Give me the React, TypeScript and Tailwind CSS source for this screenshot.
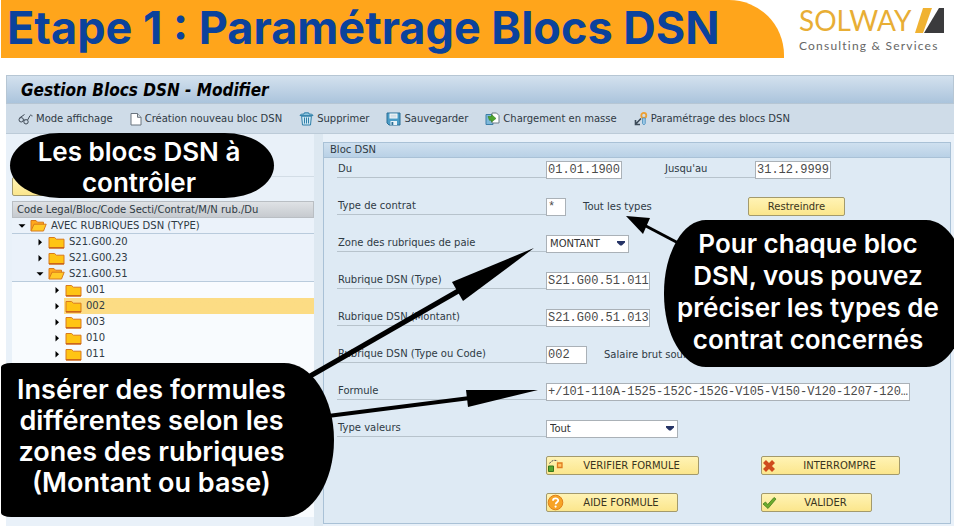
import type { ReactNode } from "react";

const ui = "font-['DejaVu_Sans',sans-serif]";
const mono = "font-['Liberation_Mono',monospace]";
const display = "font-['Inter','Open_Sans',sans-serif]";

function GlassesIcon() {
  return (
    <svg width="15" height="12" viewBox="0 0 15 12" fill="none" stroke="#3f4a56" strokeWidth="1">
      <circle cx="3.2" cy="6.8" r="2.2" />
      <circle cx="8" cy="8.8" r="2.2" />
      <path d="M1.5 5 6.5 1.5M5.2 7.2l1-.6 .6 .7M9.6 7 12 2.6c.8-1.2 2-.6 2 .8" />
    </svg>
  );
}

function PageIcon() {
  return (
    <svg width="12" height="14" viewBox="0 0 12 14" fill="#fff" stroke="#6a747e" strokeWidth="1">
      <path d="M1 1.5h6.5l3.5 3.8v7.7H1z" />
      <path d="M7.5 1.5v3.8H11" fill="#d5dce2" />
    </svg>
  );
}

function TrashIcon() {
  return (
    <svg width="15" height="14" viewBox="0 0 15 14" fill="none" stroke="#2f7fa8" strokeWidth="1">
      <path d="M2.6 4.2h9.8l-.9 8.8h-8z" fill="#cfe8f4" />
      <path d="M1 3.6C1.4 2 3 2.2 5 2l.4-1.2h4.2L10 2c2 .2 3.600 0 4 1.600z" fill="#8cc4de" />
      <path d="M5.500 5.500v6M7.500 5.500v6M9.500 5.500v6" />
    </svg>
  );
}

function SaveIcon() {
  return (
    <svg width="15" height="14" viewBox="0 0 15 14">
      <path d="M1 1h13v12H3l-2-2z" fill="#4a9cc6" stroke="#2a6f96" />
      <path d="M3.500 1.500h8v5h-8z" fill="#f6fafc" />
      <path d="M4.500 3.200h6M4.500 4.900h6" stroke="#b5c9d6" strokeWidth=".8" />
      <path d="M4.500 9h6.500v4H4.500z" fill="#e8f2f8" />
      <path d="M5.500 10h1.800v3H5.500z" fill="#2a6f96" />
    </svg>
  );
}

function UploadIcon() {
  return (
    <svg width="15" height="14" viewBox="0 0 15 14">
      <path d="M1 2.500h7v10H1z" fill="#7db8da" stroke="#3d7ea8" />
      <path d="M7 1h4.500L14 3.500V11H7z" fill="#fff" stroke="#6d7c88" />
      <path d="M3 4.500h3.500V2.600L11 6.500 6.500 10V8.300H4.500z" fill="#4ea52e" stroke="#37801d" strokeWidth=".6" />
    </svg>
  );
}

function KeyToolIcon() {
  return (
    <svg width="14" height="14" viewBox="0 0 14 14" fill="none">
      <circle cx="9.800" cy="3.400" r="2.500" stroke="#eda032" strokeWidth="1.800" />
      <path d="M8.500 6h2.800v5.500L9.900 13l-1.400-1.500z" fill="#9cc8e6" stroke="#4b8fbd" strokeWidth=".8" />
      <path d="M7 6.500 2 11.800M1.500 8v4.500H6" stroke="#3b4a58" strokeWidth="1.600" />
    </svg>
  );
}

function FolderIcon({ open }: { open?: boolean }) {
  return (
    <svg width="17" height="13" viewBox="0 0 17 13" strokeLinejoin="round">
      {open ? (
        <>
          <path d="M1 11.800V1.500h5l1.500 1.700h6V6" fill="#ffa81c" stroke="#d97a1c" />
          <path d="M1 12 4 5.200h12.200L13.500 12z" fill="#ffca28" stroke="#d97a1c" />
        </>
      ) : (
        <>
          <path d="M1 1.500h5.500L8.500 3.200H16V12H1z" fill="#ffc414" stroke="#d97a1c" />
          <path d="M1 11.800h15" stroke="#c9601a" strokeWidth="1.400" />
        </>
      )}
    </svg>
  );
}

function Caret({ open }: { open?: boolean }) {
  return (
    <svg width="8" height="8" viewBox="0 0 8 8" fill="#000">
      {open ? <path d="M.5 2.200h7L4 5.800z" /> : <path d="M2.500 1v6.400L6 4.200z" />}
    </svg>
  );
}

function FlowIcon() {
  return (
    <svg width="17" height="15" viewBox="0 0 17 15">
      <path d="M1.500 8h5v5.500h-5z" fill="#55a630" stroke="#37761c" />
      <path d="M10.500 5h4.500v4.500h-4.500z" fill="#ffc766" stroke="#e07b1e" strokeWidth="1.300" />
      <path d="M2.500 5.500C4 2.500 8 1.500 10.500 3" fill="none" stroke="#555" strokeDasharray="2 1" />
    </svg>
  );
}

function HelpIcon() {
  return (
    <svg width="17" height="17" viewBox="0 0 17 17">
      <circle cx="8.500" cy="8.500" r="7.300" fill="#f7a325" stroke="#e0801a" />
      <path d="M6 6.700c0-3.200 5.200-3 5.200-.3 0 1.900-2.500 1.900-2.500 3.900" fill="none" stroke="#fff" strokeWidth="1.800" />
      <circle cx="8.600" cy="12.600" r="1.100" fill="#fff" />
    </svg>
  );
}

function CrossIcon() {
  return (
    <svg width="14" height="14" viewBox="0 0 14 14">
      <path d="m2.500 2.500 9 9M11.500 2.500l-9 9" stroke="#cf4a1c" strokeWidth="4.200" />
    </svg>
  );
}

function CheckIcon() {
  return (
    <svg width="15" height="14" viewBox="0 0 15 14">
      <path d="M1 8 3.500 6l2.200 2.600L12 1.500l2 1.500-8 9.500z" fill="#6cab2e" stroke="#447f1c" strokeWidth=".8" />
    </svg>
  );
}

const tools: { label: string; icon: ReactNode }[] = [
  { label: "Mode affichage", icon: <GlassesIcon /> },
  { label: "Création nouveau bloc DSN", icon: <PageIcon /> },
  { label: "Supprimer", icon: <TrashIcon /> },
  { label: "Sauvegarder", icon: <SaveIcon /> },
  { label: "Chargement en masse", icon: <UploadIcon /> },
  { label: "Paramétrage des blocs DSN", icon: <KeyToolIcon /> },
];

const leaves = ["001", "002", "003", "010", "011"];

function TreeRow({ label, open, className }: { label: string; open?: boolean; className: string }) {
  return (
    <li className={`flex h-4 items-center ${className}`}>
      <button type="button" className="flex h-4 items-center">
        <Caret open={open} />
        <span className="ml-1">
          <FolderIcon open={open} />
        </span>
        <span className="ml-1">{label}</span>
      </button>
    </li>
  );
}

function FormRow({ id, label, children }: { id?: string; label: string; children: ReactNode }) {
  return (
    <div className="flex h-[17px] items-center">
      <label htmlFor={id} className="flex h-[17px] w-[209px] shrink-0 items-center border-b border-[#b7c3cc] pl-px">
        {label}
      </label>
      {children}
    </div>
  );
}

function TextField({ id, value, className }: { id: string; value: string; className: string }) {
  return (
    <input
      id={id}
      defaultValue={value}
      className={`h-[18px] shrink-0 border border-[#aab1b7] bg-white pl-px text-[12px] text-[#4a4a4a] outline-none ${mono} ${className}`}
    />
  );
}

function SelectField({ id, value, className }: { id: string; value: string; className: string }) {
  return (
    <div className={`relative h-[18px] ${className}`}>
      <select id={id} className="h-[18px] w-full appearance-none border border-[#aab1b7] bg-white pl-[3px] text-[#333]">
        <option>{value}</option>
      </select>
      <svg className="pointer-events-none absolute top-[6px] right-[4px]" width="8" height="5" viewBox="0 0 8 5">
        <path d="M0 0h8v1.500L4.800 4.500H3.200L0 1.500z" fill="#263466" />
      </svg>
    </div>
  );
}

function YellowButton({ icon, children, className }: { icon?: ReactNode; children: ReactNode; className: string }) {
  return (
    <button
      type="button"
      className={`flex h-[19px] shrink-0 items-center rounded-[2px] border border-[#a39a6c] bg-linear-to-b from-[#fff3b4] to-[#fbe68c] text-[#3a3520] ${className}`}
    >
      {icon && <span className="w-[18px] shrink-0">{icon}</span>}
      <span className="flex-1 text-center">{children}</span>
    </button>
  );
}

function Callout({ lines, className }: { lines: string[]; className: string }) {
  return (
    <div className={`absolute flex flex-col items-center justify-center bg-black text-center font-semibold whitespace-nowrap text-white ${display} ${className}`}>
      {lines.map((line) => (
        <span key={line}>{line}</span>
      ))}
    </div>
  );
}

function Logo() {
  return (
    <div className="mr-[10px] flex w-[145px] flex-col pt-[3px] font-['Lato',sans-serif]">
      <div className="flex h-[35px] items-center justify-between">
        <span className="text-[28px] leading-[35px] text-[#e8ae35]">SOLWAY</span>
        <svg width="29" height="25" viewBox="0 0 29 25">
          <path d="M8 0h9L8 25H0z" fill="#f0b232" />
          <path d="M24 0h5v25H9z" fill="#3b3b3d" />
        </svg>
      </div>
      <span className="text-[12px] leading-[15px] tracking-widest whitespace-nowrap text-[#666]">Consulting &amp; Services</span>
    </div>
  );
}

export default function App() {
  return (
    <div className="relative w-full overflow-hidden bg-white pr-px">
      <header className="flex h-[58px] justify-between">
        <h1 className={`ml-px h-[58px] w-[783px] rounded-tr-[55px] bg-[#ffa51b] pl-[6px] text-[45px] leading-[55px] font-bold whitespace-nowrap text-[#0b429c] ${display}`}>
          Etape 1 : Paramétrage Blocs DSN
        </h1>
        <Logo />
      </header>

      <main className={`mt-[17px] ml-[6px] text-[10px] leading-[14px] text-[#2f3a44] ${ui}`}>
        <h2 className="flex h-[29px] items-center border border-[#b6c6d4] bg-linear-to-b from-[#d3e1ee] to-[#abc4dc] pl-[14px] font-['DejaVu_Sans_Condensed','DejaVu_Sans',sans-serif] text-[17px] font-bold text-black italic">
          Gestion Blocs DSN - Modifier
        </h2>
        <nav className="flex h-[30px] items-center gap-[17px] border-b border-[#bccbd8] bg-[#cfdce8] pl-3">
          {tools.map((t) => (
            <button key={t.label} type="button" className="flex items-center gap-[3px] whitespace-nowrap">
              {t.icon}
              {t.label}
            </button>
          ))}
        </nav>

        <div className="flex h-[392px] bg-[#e9f1f9]">
          <aside className="flex w-[317px] shrink-0 flex-col border-r-[9px] border-[#dde8f1] pl-[6px]">
            <div className="h-[43px] border-b border-[#d3dde6]" />
            <YellowButton className="w-16">{" "}</YellowButton>
            <div className="mt-[5px] flex h-[17px] items-center border border-[#b9bec3] bg-linear-to-b from-[#dfe2e5] to-[#c6cacf] pl-1">
              Code Legal/Bloc/Code Secti/Contrat/M/N rub./Du
            </div>
            <ul className="bg-[#f8fbfe]">
              <TreeRow label="AVEC RUBRIQUES DSN (TYPE)" open className="border-b border-[#b9cbdc] bg-[#ebf2fa] pl-[6px]" />
              <TreeRow label="S21.G00.20" className="bg-[#ebf2fa] pl-6" />
              <TreeRow label="S21.G00.23" className="bg-[#ebf2fa] pl-6" />
              <TreeRow label="S21.G00.51" open className="border-b border-[#b9cbdc] bg-[#ebf2fa] pl-6" />
              {leaves.map((l) => (
                <TreeRow
                  key={l}
                  label={l}
                  className={l === "002" ? "bg-linear-to-r from-transparent from-[52px] to-[#fcdc84] to-[52px] pl-[41px]" : "pl-[41px]"}
                />
              ))}
            </ul>
            <div className="h-[155px] bg-[#f8fbfe]" />
          </aside>

          <section className="mt-[8px] mr-[3px] flex h-[382px] flex-1 flex-col border border-[#a9c1d6] bg-[#deeaf4]">
            <h3 className="flex h-[15px] items-center border-b border-[#a9c1d6] bg-linear-to-b from-[#cfe0ef] to-[#b9d1e6] pl-[6px]">
              Bloc DSN
            </h3>
            <form className="flex flex-col gap-5 pt-[3px] pl-[13px]">
              <FormRow id="du" label="Du">
                <TextField id="du" value="01.01.1900" className="w-[76px]" />
                <label htmlFor="au" className="ml-[43px] flex h-[17px] w-[90px] items-center border-b border-[#b7c3cc]">
                  Jusqu'au
                </label>
                <TextField id="au" value="31.12.9999" className="w-[76px]" />
              </FormRow>
              <FormRow id="contrat" label="Type de contrat">
                <TextField id="contrat" value="*" className="w-[20px]" />
                <span className="ml-[17px] w-[165px]">Tout les types</span>
                <YellowButton className="w-[97px]">Restreindre</YellowButton>
              </FormRow>
              <FormRow id="zone" label="Zone des rubriques de paie">
                <SelectField id="zone" value="MONTANT" className="w-[83px]" />
              </FormRow>
              <FormRow id="type" label="Rubrique DSN (Type)">
                <TextField id="type" value="S21.G00.51.011" className="w-[104px]" />
              </FormRow>
              <FormRow id="montant" label="Rubrique DSN (Montant)">
                <TextField id="montant" value="S21.G00.51.013" className="w-[104px]" />
              </FormRow>
              <FormRow id="code" label="Rubrique DSN (Type ou Code)">
                <TextField id="code" value="002" className="w-[41px]" />
                <span className="ml-[17px]">Salaire brut soumis</span>
              </FormRow>
              <FormRow id="formule" label="Formule">
                <TextField id="formule" value="+/101-110A-1525-152C-152G-V105-V150-V120-1207-120…" className="w-[364px]" />
              </FormRow>
              <FormRow id="valeurs" label="Type valeurs">
                <SelectField id="valeurs" value="Tout" className="w-[132px]" />
              </FormRow>
              <div className="flex h-[17px] items-center pl-[209px]">
                <div className="w-[215px]">
                  <YellowButton icon={<FlowIcon />} className="w-[153px]">VERIFIER FORMULE</YellowButton>
                </div>
                <YellowButton icon={<CrossIcon />} className="w-[139px]">INTERROMPRE</YellowButton>
              </div>
              <div className="flex h-[17px] items-center pl-[209px]">
                <div className="w-[215px]">
                  <YellowButton icon={<HelpIcon />} className="w-[132px]">AIDE FORMULE</YellowButton>
                </div>
                <YellowButton icon={<CheckIcon />} className="w-[111px]">VALIDER</YellowButton>
              </div>
            </form>
          </section>
        </div>
      </main>

      <svg className="pointer-events-none absolute top-0 left-0" width="955" height="526" viewBox="0 0 955 526">
        <path d="M305 379 460 290" stroke="#000" strokeWidth="5" />
        <path d="M534 248 452 282l11 19z" />
        <path d="M328 416 470 398" stroke="#000" strokeWidth="4" />
        <path d="M538 390h-72l2 17z" />
        <path d="M682 245 644 225" stroke="#000" strokeWidth="3" />
        <path d="m626 216 24 2-7 16z" />
      </svg>
      <Callout
        lines={["Les blocs DSN à", "contrôler"]}
        className="top-[133px] left-[10px] h-[65px] w-[264px] rounded-[50px/33px] pt-[3px] pr-[6px] text-[26px] leading-[31px]"
      />
      <Callout
        lines={["Insérer des formules", "différentes selon les", "zones des rubriques", "(Montant ou base)"]}
        className="top-[363px] left-px h-[154px] w-[333px] rounded-r-[50px_77px] rounded-l-[10px_4px] pr-8 pb-2 text-[27px] leading-[31px]"
      />
      <div className="absolute top-[220px] right-px h-[147px] w-[290px] overflow-hidden">
        <Callout
          lines={["Pour chaque bloc", "DSN, vous pouvez", "préciser les types de", "contrat concernés"]}
          className="top-0 left-0 h-[147px] w-[304px] rounded-[42px/73px] pr-4 pb-1 text-[26px] leading-8"
        />
      </div>
    </div>
  );
}
